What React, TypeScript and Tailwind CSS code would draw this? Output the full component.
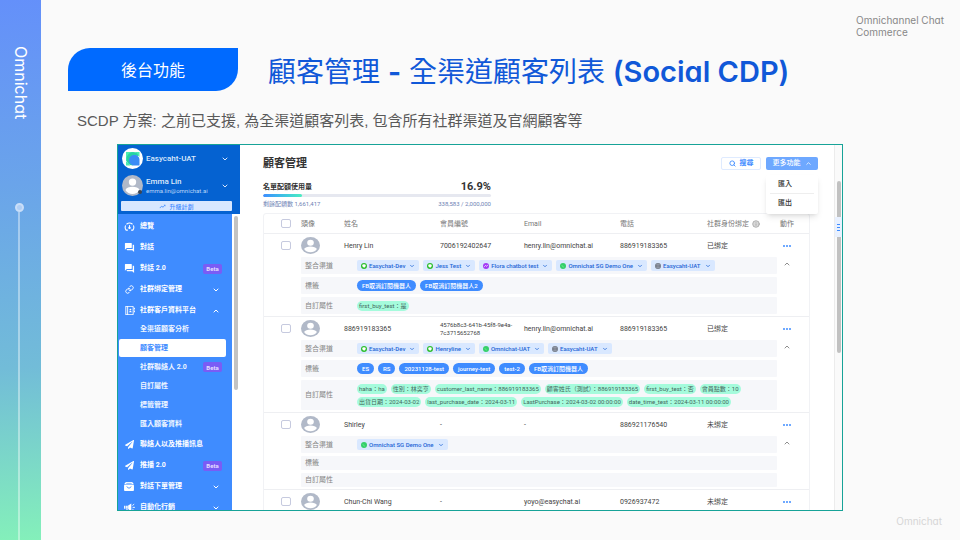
import React from "react";
import { ChevronDown, ChevronUp, Info, Link, Search } from "lucide-react";
import { MdQuestionAnswer, MdTrendingUp } from "react-icons/md";
import { RiContactsBookLine } from "react-icons/ri";
import { FaPaperPlane } from "react-icons/fa";

const ui = "font-[Roboto,'Noto_Sans_CJK_TC',sans-serif]";
const brand = "font-[Inter,'Noto_Sans_CJK_TC',sans-serif] [font-feature-settings:'cv11']";

function GaugeIcon() {
  return (
    <svg viewBox="0 0 24 20" className="h-[9px] w-[11px]" fill="none" stroke="currentColor" strokeWidth="2.4" strokeLinecap="round">
      <path d="M4.500 18A10 10 0 0 1 3 8.500M6 4.500A10 10 0 0 1 18 4.500M21 8.500A10 10 0 0 1 19.500 18M4.500 18h3M16.500 18h3M12 13V8" />
      <circle cx="12" cy="13" r="1.500" fill="currentColor" />
    </svg>
  );
}

function ShopIcon() {
  return (
    <svg viewBox="0 0 22 20" className="h-[9px] w-[10px]">
      <path d="M4 0h14l4 5H0z" fill="#fff" />
      <path d="M5 3h12" stroke="#3f8cff" strokeWidth="1.500" />
      <rect y="6" width="22" height="14" rx="2" fill="#fff" />
      <path d="M6.500 10.500a4.800 4.800 0 0 0 9 0" fill="none" stroke="#3f8cff" strokeWidth="2" strokeLinecap="round" />
    </svg>
  );
}

function MegaphoneIcon() {
  return (
    <svg viewBox="0 0 24 20" className="h-[9px] w-[11px]">
      <path d="M0 6h3v7H0zM4.500 6H8v7H4.500zM9 5.500l7-4.500v17.500L9 13.500zM4.500 14h3.500l1 6H6z" fill="#fff" />
      <path d="M18.500 5.500l4-3M19 9.700h5M18.500 14l4 3" stroke="#fff" strokeWidth="2" />
    </svg>
  );
}

function Avatar({ className }: { className: string }) {
  return (
    <svg viewBox="0 0 40 40" preserveAspectRatio="none" className={className} aria-hidden="true">
      <circle cx="20" cy="20" r="20" fill="#b1b9c8" />
      <circle cx="20" cy="13.500" r="7" fill="#fff" />
      <path d="M6.500 28.500C8 24.500 14 22.500 20 22.500s12 2 13.500 6C30.500 33.500 25.500 36 20 36S9.500 33.500 6.500 28.500z" fill="#fff" />
    </svg>
  );
}

function BrandMark() {
  return (
    <svg viewBox="0 0 42 42" className="size-[21px] shrink-0" aria-hidden="true">
      <circle cx="21" cy="21" r="21" fill="#fff" />
      <path d="M8 8h14l-6 8-6 10H8zM26 8h9v10zM8 26l9 9H8z" fill="#4ceeb0" />
      <path d="M22 8c-8 1-13 7-13 14 0 7 5 13 13 13l-5-12 5-8 11 1c-1-5-5-8-11-8z" fill="#28d3a4" />
      <path d="M35 24c0-6-4-10-10-10s-11 4-11 10c0 7 5 11 11 11h10z" fill="#3a8cf6" />
    </svg>
  );
}

type Kind = "line" | "messenger" | "whatsapp" | "web";

function ChannelIcon({ kind }: { kind: Kind }) {
  if (kind === "web") {
    return (
      <svg viewBox="0 0 12 12" className="size-[6px]">
        <circle cx="6" cy="6" r="6" fill="#6d7580" />
        <path d="M0 6h12M6 0v12M1.500 3h9M1.500 9h9" stroke="#b9c3d2" strokeWidth=".7" />
      </svg>
    );
  }
  if (kind === "whatsapp") {
    return (
      <svg viewBox="0 0 12 12" className="size-[6px]">
        <circle cx="6" cy="6" r="6" fill="#35d06a" />
        <path d="M4 4c0 2.500 1.500 4 4 4" stroke="#8ff0ae" fill="none" />
      </svg>
    );
  }
  if (kind === "messenger") {
    return (
      <svg viewBox="0 0 12 12" className="size-[6px]">
        <circle cx="6" cy="6" r="6" fill="#a33cf5" />
        <path d="M2.500 7.500l2.500-2.500 2 1.500 2.500-2" stroke="#fff" strokeWidth="1.600" fill="none" />
      </svg>
    );
  }
  return (
    <svg viewBox="0 0 12 12" className="size-[6px]">
      <circle cx="6" cy="6" r="6" fill="#2bbd2b" />
      <ellipse cx="6" cy="5.500" rx="3.600" ry="2.900" fill="#fff" />
      <path d="M5 8l1 2 2-2.500z" fill="#fff" />
    </svg>
  );
}

function Beta() {
  return (
    <span className="mr-[10px] flex h-[10px] w-[19px] items-center justify-center rounded-[2px] bg-[#7a5cf5] text-[6px] font-bold text-[#e3dcff]">
      Beta
    </span>
  );
}

function MenuItem({ icon, label, end }: { icon: React.ReactNode; label: string; end?: React.ReactNode }) {
  return (
    <li>
      <a href="#" className="flex h-[21px] items-center">
        <span className="flex w-[22px] justify-center">{icon}</span>
        <span className="flex-1 whitespace-nowrap">{label}</span>
        {end}
      </a>
    </li>
  );
}

const subItems = ["全渠道顧客分析", "顧客管理", "社群聯絡人 2.0", "自訂屬性", "標籤管理", "匯入顧客資料"];

function Sidebar() {
  const down = <ChevronDown className="mr-3 size-[8px]" strokeWidth={3} />;
  const up = <ChevronUp className="mr-3 size-[8px]" strokeWidth={3} />;
  return (
    <aside className="flex w-[122px] shrink-0 flex-col text-white">
      <div className="flex h-[69px] flex-col bg-[#0562d1] pt-[3px]">
        <button className="flex h-[21px] items-center gap-[3px] pr-[11px] pl-1 text-left text-[8px] font-medium text-[#dbe8fb]">
          <BrandMark />
          <span className="flex-1">Easycaht-UAT</span>
          <ChevronDown className="size-[8px]" strokeWidth={3} />
        </button>
        <button className="mt-[6px] flex h-[21px] items-center gap-[3px] pr-[11px] pl-1 text-left text-[8px] font-medium text-[#dbe8fb]">
          <span className="relative">
            <Avatar className="size-[21px] shrink-0" />
            <span className="absolute right-[1px] bottom-[2px] size-[4px] rounded-full bg-[#3d4552]" />
          </span>
          <span className="flex-1 leading-[9px]">
            Emma Lin
            <span className="block text-[6px] leading-[9px] font-normal text-[#b9d5f9]">emma.lin@omnichat.ai</span>
          </span>
          <ChevronDown className="size-[8px]" strokeWidth={3} />
        </button>
        <button className="mt-[5px] ml-[3px] flex h-[10px] w-[111px] items-center justify-center gap-[3px] rounded-[1px] bg-[#d8e7ff] text-[6px] font-medium text-[#3f8cff]">
          <MdTrendingUp className="size-[7px]" />
          升級計劃
        </button>
      </div>
      <div className="flex min-h-0 flex-1 bg-white">
        <nav className="w-[114px] overflow-hidden bg-[#3f8cff] pt-[2px] text-[7px] font-bold">
          <ul>
            <MenuItem icon={<GaugeIcon />} label="總覽" />
            <MenuItem icon={<MdQuestionAnswer className="size-[11px]" />} label="對話" />
            <MenuItem icon={<MdQuestionAnswer className="size-[11px]" />} label="對話 2.0" end={<Beta />} />
            <MenuItem icon={<Link className="size-[9px]" strokeWidth={2.5} />} label="社群綁定管理" end={down} />
            <MenuItem icon={<RiContactsBookLine className="size-[11px]" />} label="社群客戶資料平台" end={up} />
            <li>
              <ul className="-mt-px">
                {subItems.map((s) => (
                  <li key={s} className="h-[19px]">
                    <a
                      href="#"
                      className={
                        s === "顧客管理"
                          ? "mr-[6px] ml-[1px] flex h-[18px] items-center rounded-[2px] bg-white pl-[21px] text-[#3f8cff]"
                          : "flex h-[18px] items-center pl-[22px] text-[#eef5ff]"
                      }
                    >
                      <span className="flex-1">{s}</span>
                      {s.includes("2.0") && <Beta />}
                    </a>
                  </li>
                ))}
              </ul>
            </li>
            <MenuItem icon={<FaPaperPlane className="size-[9px]" />} label="聯絡人以及推播訊息" />
            <MenuItem icon={<FaPaperPlane className="size-[9px]" />} label="推播 2.0" end={<Beta />} />
            <MenuItem icon={<ShopIcon />} label="對話下單管理" end={down} />
            <MenuItem icon={<MegaphoneIcon />} label="自動化行銷" end={down} />
          </ul>
        </nav>
        <div className="flex-1 pt-[2px] pl-[2px]">
          <div className="h-[174px] w-[4px] rounded-full bg-[#c3c3c3]" />
        </div>
      </div>
    </aside>
  );
}

function Chip({ kind, name }: { kind: Kind; name: string }) {
  return (
    <button className="flex h-[11px] items-center rounded-[2px] bg-[#d9e8ff] px-[4px] text-[6px] font-medium whitespace-nowrap text-[#1f66d6]">
      <ChannelIcon kind={kind} />
      <span className="mr-[4px] ml-[2px]">{name}</span>
      <ChevronDown className="size-[6px]" strokeWidth={3} />
    </button>
  );
}

function Detail({ label, tall, children }: { label: string; tall?: string; children?: React.ReactNode }) {
  return (
    <div className={`flex items-center rounded-[1px] bg-[#f6f7fa] pl-1 ${tall ?? "h-[17px]"}`}>
      <div className="w-[52px] shrink-0 text-[7px] text-[#858585]">{label}</div>
      <div className="flex flex-1 flex-wrap gap-x-1 gap-y-[3px]">{children}</div>
    </div>
  );
}

function Tags({ items }: { items: string[] }) {
  return (
    <>
      {items.map((t) => (
        <span key={t} className="flex h-[11px] items-center rounded-full bg-[#3f8cff] px-[5px] text-[6px] font-medium whitespace-nowrap text-white">
          {t}
        </span>
      ))}
    </>
  );
}

function Attrs({ items }: { items: string[] }) {
  return (
    <>
      {items.map((t) => (
        <span key={t} className="flex h-[10px] items-center rounded-full bg-[#a5fbdc] px-[2px] text-[6px] whitespace-nowrap text-[#44675c]">
          {t}
        </span>
      ))}
    </>
  );
}

type Customer = {
  name: string;
  id: string;
  email: string;
  phone: string;
  bound: string;
  chips?: [Kind, string][];
  tags?: string[];
  attrs?: string[];
};

const customers: Customer[] = [
  {
    name: "Henry Lin",
    id: "7006192402647",
    email: "henry.lin@omnichat.ai",
    phone: "886919183365",
    bound: "已綁定",
    chips: [
      ["line", "Easychat-Dev"],
      ["line", "Jess Test"],
      ["messenger", "Flora chatbot test"],
      ["whatsapp", "Omnichat SG Demo One"],
      ["web", "Easycaht-UAT"],
    ],
    tags: ["FB取消訂閱機器人", "FB取消訂閱機器人2"],
    attrs: ["first_buy_test：是"],
  },
  {
    name: "886919183365",
    id: "4576b8c3-641b-45f8-9e4a-7c3715652768",
    email: "henry.lin@omnichat.ai",
    phone: "886919183365",
    bound: "已綁定",
    chips: [
      ["line", "Easychat-Dev"],
      ["line", "Henryline"],
      ["whatsapp", "Omnichat-UAT"],
      ["web", "Easycaht-UAT"],
    ],
    tags: ["ES", "RS", "20231128-test", "journey-test", "test-2", "FB取消訂閱機器人"],
    attrs: [
      "haha：ha",
      "性別：林奕亨",
      "customer_last_name：886919183365",
      "顧客姓氏（測試）：886919183365",
      "first_buy_test：否",
      "會員點數：10",
      "出貨日期：2024-03-02",
      "last_purchase_date：2024-03-11",
      "LastPurchase：2024-03-02 00:00:00",
      "date_time_test：2024-03-11 00:00:00",
    ],
  },
  {
    name: "Shirley",
    id: "-",
    email: "-",
    phone: "886921176540",
    bound: "未綁定",
    chips: [["whatsapp", "Omnichat SG Demo One"]],
  },
  { name: "Chun-Chi Wang", id: "-", email: "yoyo@easychat.ai", phone: "0926937472", bound: "未綁定" },
];

function Check({ label }: { label: string }) {
  return (
    <input
      type="checkbox"
      aria-label={label}
      className="ml-[17px] block h-[9px] w-[10px] appearance-none rounded-[2px] border border-[#c6cadf] bg-white"
    />
  );
}

function CustomerTable() {
  const line = "border-b border-[#eeeff2]";
  return (
    <div className="mt-[6px] mr-6 rounded-t-[3px] border border-[#f1f2f5]">
      <table className="w-full table-fixed border-separate border-spacing-0 text-left text-[7px] leading-[8px] text-[#444]">
        <colgroup>
          <col className="w-[37px]" />
          <col className="w-[43px]" />
          <col className="w-[96px]" />
          <col className="w-[84px]" />
          <col />
          <col className="w-[87px]" />
          <col className="w-[70px]" />
          <col className="w-[32px]" />
        </colgroup>
        <thead>
          <tr className="h-[20px] text-[#777]">
            <th className={line}><Check label="全選" /></th>
            <th className={`font-normal ${line}`}>頭像</th>
            <th className={`font-normal ${line}`}>姓名</th>
            <th className={`font-normal ${line}`}>會員編號</th>
            <th className={`font-normal ${line}`}>Email</th>
            <th className={`font-normal ${line}`}>電話</th>
            <th className={`font-normal ${line}`}>
              <span className="flex items-center gap-[3px] whitespace-nowrap">
                社群身份綁定
                <Info className="size-[8px] fill-[#d8d8d8] text-[#999]" />
              </span>
            </th>
            <th className={`pl-[3px] font-normal ${line}`}>動作</th>
          </tr>
        </thead>
        {customers.map((c, i) => (
          <tbody key={i}>
            <tr className="h-[23px]">
              <td><Check label={c.name} /></td>
              <td><Avatar className="h-[17px] w-[19px]" /></td>
              <td>{c.name}</td>
              <td className={c.id.length > 20 ? "text-[6px]" : ""}>{c.id}</td>
              <td>{c.email}</td>
              <td>{c.phone}</td>
              <td>{c.bound}</td>
              <td>
                <button aria-label="更多" className="ml-[6px] flex gap-[1px]">
                  <span className="size-[2px] rounded-full bg-[#3f8cff]" />
                  <span className="size-[2px] rounded-full bg-[#3f8cff]" />
                  <span className="size-[2px] rounded-full bg-[#3f8cff]" />
                </button>
              </td>
            </tr>
            {i < 3 && (
              <tr>
                <td className={line} />
                <td colSpan={6} className={`pb-[2px] ${line}`}>
                  <div className="flex flex-col gap-[3px]">
                    <Detail label="整合渠道">
                      {c.chips?.map(([k, n]) => <Chip key={n} kind={k} name={n} />)}
                    </Detail>
                    <Detail label="標籤" tall={c.tags ? undefined : "h-[14px]"}>
                      {c.tags && <Tags items={c.tags} />}
                    </Detail>
                    <Detail label="自訂屬性" tall={c.attrs ? (c.attrs.length > 1 ? "h-[30px]" : undefined) : "h-[14px]"}>
                      {c.attrs && <Attrs items={c.attrs} />}
                    </Detail>
                  </div>
                </td>
                <td className={`align-top ${line}`}>
                  <button aria-label="收合" className="mt-[3px] ml-[6px] block text-[#777]">
                    <ChevronUp className="size-[8px]" strokeWidth={2.5} />
                  </button>
                </td>
              </tr>
            )}
          </tbody>
        ))}
      </table>
    </div>
  );
}

function Dashboard() {
  return (
    <section className={`flex min-h-0 flex-1 overflow-hidden border border-[#17a398] bg-white ${ui}`}>
      <Sidebar />
      <div className="min-w-0 flex-1 pt-3 pl-[23px]">
        <div className="flex h-[13px] items-center pr-4">
          <h2 className="flex-1 text-[11px] leading-[13px] font-bold text-[#333]">顧客管理</h2>
          <button className="flex h-[13px] w-[40px] items-center justify-center gap-1 rounded-[2px] border border-[#dfebff] text-[7px] font-bold text-[#3f8cff]">
            <Search className="size-[7px]" strokeWidth={3} />
            搜尋
          </button>
          <div className="relative ml-[5px]">
            <button className="flex h-[13px] w-[52px] items-center justify-center gap-1 rounded-[2px] bg-[#6ea8ff] text-[7px] font-medium text-white">
              更多功能
              <ChevronUp className="size-[7px]" strokeWidth={2.5} />
            </button>
            <div className="absolute top-[18px] left-0 z-10 flex h-[39px] w-[52px] flex-col rounded-[2px] bg-white px-1 pb-[2px] text-[7px] font-medium text-[#333] shadow-md">
              <button className="flex-1 border-b border-[#eeeeee] pl-2 text-left">匯入</button>
              <button className="flex-1 pl-2 text-left">匯出</button>
            </div>
          </div>
        </div>
        <div className="mt-[11px] w-[228px]">
          <div className="flex h-3 items-center justify-between text-[#333]">
            <span className="text-[7px] font-bold">名單配額使用量</span>
            <span className="text-[11px] leading-3 font-bold">16.9%</span>
          </div>
          <div className="mt-[1px] h-[3px] overflow-hidden rounded-full bg-[#e6e8f0]">
            <div className="h-full rounded-full bg-linear-to-r from-[#3f8cff] to-[#4deec0]" style={{ width: "16.9%" }} />
          </div>
          <div className="mt-[3px] flex justify-between text-[6px] leading-[7px] text-[#6f83b5]">
            <span>剩餘配額數 1,661,417</span>
            <span>338,583 / 2,000,000</span>
          </div>
        </div>
        <CustomerTable />
      </div>
      <div className="flex w-[8px] shrink-0 flex-col items-center border-l border-[#ececec] bg-[#fafafa] pt-[36px]">
        <div className="h-[36px] w-[4px] rounded-t-full bg-[#c1c1c1]" />
        <div className="flex h-[20px] w-full flex-col items-center justify-center gap-[2px] bg-[#e9f1ff]">
          <span className="h-px w-[3px] bg-[#3f8cff]" />
          <span className="h-px w-[3px] bg-[#3f8cff]" />
          <span className="h-px w-[3px] bg-[#3f8cff]" />
        </div>
        <div className="h-[116px] w-[4px] rounded-b-full bg-[#c1c1c1]" />
      </div>
    </section>
  );
}

export default function App() {
  return (
    <div className="flex h-screen overflow-hidden bg-[#fafafa]">
      <div className="flex w-[41px] shrink-0 flex-col items-center bg-[linear-gradient(176deg,#6490fa_0%,#6aa4ea_34%,#72bcd8_68%,#84f0ba_100%)] pt-[46px] pr-[3px]">
        <div className={`h-[157px] pl-[4px] text-[16px] leading-[20px] text-white [writing-mode:vertical-rl] ${brand}`}>Omnichat</div>
        <div className="size-[9px] rounded-full border-2 border-[#c9def8] bg-[#b0cff5]" />
        <div className="w-[2px] flex-1 bg-white/40" />
      </div>
      <main className="flex min-w-0 flex-1 flex-col">
        <header className="flex h-[48px] justify-end pt-[14px] pr-[15px]">
          <p className={`w-[89px] text-[10px] leading-[12px] whitespace-nowrap text-[#888] ${brand}`}>
            Omnichannel Chat
            <br />
            Commerce
          </p>
        </header>
        <div className="flex h-[43px] items-center pl-[27px]">
          <div className="flex h-full w-[170px] shrink-0 items-center justify-center rounded-tl-[22px] rounded-br-[22px] bg-[#006aff] pb-[2px] font-['Noto_Sans_CJK_TC',sans-serif] text-[16px] text-white">
            後台功能
          </div>
          <h1 className={`ml-[30px] pt-1 text-[28px] leading-[36px] whitespace-nowrap text-[#1058d8] ${brand}`}>
            顧客管理 <b className="font-bold">-</b> 全渠道顧客列表 <b className="text-[29px] font-semibold">(Social CDP)</b>
          </h1>
        </div>
        <p className="flex h-[53px] items-center pt-2 pl-[36px] font-['Liberation_Sans','Noto_Sans_CJK_TC',sans-serif] text-[15px] whitespace-nowrap text-[#595959]">
          SCDP 方案: 之前已支援, 為全渠道顧客列表, 包含所有社群渠道及官網顧客等
        </p>
        <div className="mr-[117px] ml-[76px] flex min-h-0 flex-1">
          <Dashboard />
        </div>
        <footer className={`flex h-[29px] justify-end pt-1 pr-[18px] text-[10px] leading-[12px] text-[#d6d6d6] ${brand}`}>Omnichat</footer>
      </main>
    </div>
  );
}
